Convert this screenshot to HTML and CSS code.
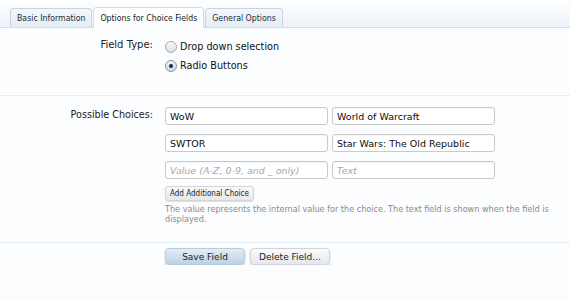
FILE: index.html
```html
<!DOCTYPE html>
<html>
<head>
<meta charset="utf-8">
<link rel="stylesheet" href="styles.css">
</head>
<body>
<div class="tabs">
  <span class="tab">Basic Information</span>
  <span class="tab active">Options for Choice Fields</span>
  <span class="tab">General Options</span>
</div>
<div class="form">
  <div class="row row-type">
    <div class="label">Field Type:</div>
    <div class="ctrl">
      <label class="radio"><input type="radio" name="ft"> Drop down selection</label>
      <label class="radio"><input type="radio" name="ft" checked> Radio Buttons</label>
    </div>
  </div>
  <div class="divider"></div>
  <div class="row row-choices">
    <div class="label">Possible Choices:</div>
    <div class="ctrl">
      <div class="choices">
        <input class="text" type="text" value="WoW">
        <input class="text" type="text" value="World of Warcraft">
        <input class="text" type="text" value="SWTOR">
        <input class="text" type="text" value="Star Wars: The Old Republic">
        <input class="text" type="text" placeholder="Value (A-Z, 0-9, and _ only)">
        <input class="text" type="text" placeholder="Text">
      </div>
      <button class="small-btn" type="button">Add Additional Choice</button>
      <p class="help">The value represents the internal value for the choice. The text field is shown when the field is displayed.</p>
    </div>
  </div>
  <div class="divider"></div>
  <div class="row row-submit">
    <div class="label"></div>
    <div class="ctrl buttons">
      <button class="btn primary" type="button">Save Field</button>
      <button class="btn" type="button">Delete Field...</button>
    </div>
  </div>
</div>
</body>
</html>
```
FILE: styles.css
```css
html, body {
  margin: 0;
  padding: 0;
  background: #fcfdfe;
  font-family: "DejaVu Sans", "Noto Sans", sans-serif;
  color: #222;
}

.tabs {
  height: 27px;
  display: flex;
  align-items: flex-end;
  padding-left: 10px;
  background: linear-gradient(#fdfeff, #edf3f9);
  border-bottom: 1px solid #d3dde6;
}

.tab {
  box-sizing: border-box;
  height: 19px;
  padding: 0 6px;
  display: flex;
  align-items: center;
  font-family: "DejaVu Sans Condensed", "DejaVu Sans", sans-serif;
  font-size: 8.7px;
  color: #1f2a33;
  background: linear-gradient(#f3f8fc, #e3edf5);
  border: 1px solid #c6d5e1;
  border-bottom: none;
  border-radius: 4px 4px 0 0;
  margin-right: 1px;
}

.tab.active {
  height: 21px;
  margin-bottom: -1px;
  background: #fdfeff;
  color: #222;
  border-color: #d3dde6;
}

.form {
  padding-top: 9px;
}

.row {
  display: grid;
  grid-template-columns: 153px 1fr;
  column-gap: 12px;
}

.label {
  text-align: right;
  font-size: 10px;
  color: #222;
  line-height: 14px;
  padding-top: 1px;
}

.row-choices .label {
  font-size: 9.6px;
}

.radio {
  display: flex;
  align-items: center;
  height: 19px;
  font-size: 9.7px;
  color: #111;
}

.radio input {
  appearance: none;
  -webkit-appearance: none;
  margin: 0 3px 0 0;
  width: 12px;
  height: 12px;
  border-radius: 50%;
  border: 1px solid #a9a9a9;
  background: linear-gradient(#fafafa, #dcdcdc);
  box-sizing: border-box;
  position: relative;
}

.radio input:checked {
  border-color: #8a96a4;
  background: linear-gradient(#eef4fa, #c8d8e8);
}

.radio input:checked::after {
  content: "";
  position: absolute;
  left: 3px;
  top: 3px;
  width: 4px;
  height: 4px;
  border-radius: 50%;
  background: #1d2b3c;
}

.row-type {
  padding-bottom: 20px;
}

.divider {
  height: 1px;
  background: #e4eef5;
}

.row-choices {
  padding-top: 11px;
  padding-bottom: 18px;
}

.choices {
  display: grid;
  grid-template-columns: 163px 163px;
  column-gap: 4px;
  row-gap: 9px;
}

.text {
  box-sizing: border-box;
  height: 18px;
  margin: 0;
  border: 1px solid #c9c9c9;
  border-radius: 3px;
  background: #fff;
  padding: 0 4px;
  font-family: "DejaVu Sans", "Noto Sans", sans-serif;
  font-size: 9.5px;
  color: #0c0c0c;
  box-shadow: inset 0 1px 1px rgba(0,0,0,0.04);
}

.text::placeholder {
  color: #a8a8a8;
  font-style: italic;
}

.small-btn {
  display: block;
  margin-top: 7px;
  height: 15px;
  padding: 0 4px;
  font-family: "DejaVu Sans Condensed", "DejaVu Sans", sans-serif;
  font-size: 8px;
  color: #222;
  background: linear-gradient(#f9f9fa, #e6e8ea);
  border: 1px solid #d2d4d7;
  border-radius: 3px;
  box-shadow: 0 1px 1px rgba(0,0,0,0.12);
}

.help {
  margin: 3px 0 0;
  width: 390px;
  font-size: 8.1px;
  line-height: 10px;
  color: #8a8a8a;
}

.row-submit {
  padding-top: 5px;
}

.buttons {
  display: flex;
  gap: 5px;
}

.btn {
  box-sizing: border-box;
  height: 17px;
  width: 80px;
  font-family: "DejaVu Sans", "Noto Sans", sans-serif;
  font-size: 9px;
  color: #222;
  border: 1px solid #d0d4d8;
  border-radius: 4px;
  background: linear-gradient(#fafbfc, #e4e7ea);
  box-shadow: 0 1px 2px rgba(0,0,0,0.2);
  padding: 0;
}

.btn.primary {
  background: linear-gradient(#e3edf6, #bcd2e6);
  border-color: #b9cadb;
}
```
